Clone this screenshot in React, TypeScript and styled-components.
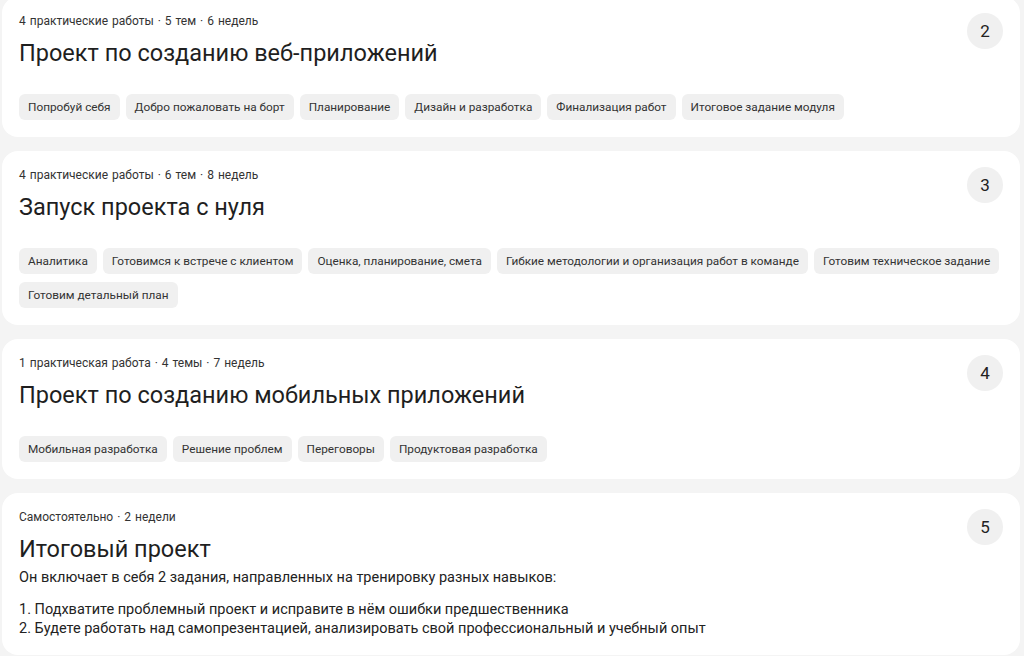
import React from "react";
import styled, { createGlobalStyle } from "styled-components";

const Global = createGlobalStyle`
  html, body { margin: 0; padding: 0; background: #f4f4f4; }
  body { font-family: Roboto, "Noto Sans", "Liberation Sans", sans-serif; color: #222; overflow: hidden; }
`;

const List = styled.div`
  display: flex;
  flex-direction: column;
  gap: 14px;
  padding: 0 4px 0 2px;
  margin-top: -3px;
`;

const Card = styled.section`
  background: #fff;
  border-radius: 16px;
  padding: 16px 17px 17px 17px;
  display: flex;
  flex-direction: column;
`;

const Header = styled.div`
  display: flex;
  justify-content: space-between;
  align-items: flex-start;
`;

const HeadText = styled.div`
  display: flex;
  flex-direction: column;
`;

const Meta = styled.div`
  font-size: 12px;
  line-height: 16px;
  color: #333;
  word-spacing: 1px;
`;

const Title = styled.h2`
  margin: 8px 0 0;
  font-size: 23.5px;
  line-height: 32px;
  font-weight: 400;
  color: #1f1f1f;
`;

const Badge = styled.div`
  width: 36px;
  height: 36px;
  border-radius: 50%;
  background: #f0f0f0;
  display: flex;
  align-items: center;
  justify-content: center;
  font-size: 17px;
  color: #222;
  flex-shrink: 0;
`;

const Chips = styled.div`
  display: flex;
  flex-wrap: wrap;
  gap: 8px 6px;
  margin-top: 25px;
`;

const Chip = styled.span`
  display: inline-block;
  height: 26px;
  line-height: 26px;
  padding: 0 9px;
  border-radius: 6px;
  background: #f0f0f0;
  font-size: 11.8px;
  color: #333;
  white-space: nowrap;
`;

const Desc = styled.div`
  margin-top: 3px;
  font-size: 14.5px;
  line-height: 19px;
  color: #222;
  p { margin: 0; }
  p + p { margin-top: 13px; }
`;

type Item = { n: number; meta: string[]; title: string; chips?: string[]; desc?: string[][] };

const items: Item[] = [
  {
    n: 2,
    meta: ["4 практические работы", "5 тем", "6 недель"],
    title: "Проект по созданию веб-приложений",
    chips: ["Попробуй себя", "Добро пожаловать на борт", "Планирование", "Дизайн и разработка", "Финализация работ", "Итоговое задание модуля"],
  },
  {
    n: 3,
    meta: ["4 практические работы", "6 тем", "8 недель"],
    title: "Запуск проекта с нуля",
    chips: ["Аналитика", "Готовимся к встрече с клиентом", "Оценка, планирование, смета", "Гибкие методологии и организация работ в команде", "Готовим техническое задание", "Готовим детальный план"],
  },
  {
    n: 4,
    meta: ["1 практическая работа", "4 темы", "7 недель"],
    title: "Проект по созданию мобильных приложений",
    chips: ["Мобильная разработка", "Решение проблем", "Переговоры", "Продуктовая разработка"],
  },
  {
    n: 5,
    meta: ["Самостоятельно", "2 недели"],
    title: "Итоговый проект",
    desc: [
      ["Он включает в себя 2 задания, направленных на тренировку разных навыков:"],
      ["1. Подхватите проблемный проект и исправите в нём ошибки предшественника", "2. Будете работать над самопрезентацией, анализировать свой профессиональный и учебный опыт"],
    ],
  },
];

export default function App() {
  return (
    <>
      <Global />
      <List>
        {items.map((it) => (
          <Card key={it.n}>
            <Header>
              <HeadText>
                <Meta>{it.meta.join(" · ")}</Meta>
                <Title>{it.title}</Title>
                {it.desc && (
                  <Desc>
                    {it.desc.map((p, i) => (
                      <p key={i}>
                        {p.map((l, j) => (
                          <React.Fragment key={j}>
                            {j > 0 && <br />}
                            {l}
                          </React.Fragment>
                        ))}
                      </p>
                    ))}
                  </Desc>
                )}
              </HeadText>
              <Badge>{it.n}</Badge>
            </Header>
            {it.chips && (
              <Chips>
                {it.chips.map((c) => (
                  <Chip key={c}>{c}</Chip>
                ))}
              </Chips>
            )}
          </Card>
        ))}
      </List>
    </>
  );
}
